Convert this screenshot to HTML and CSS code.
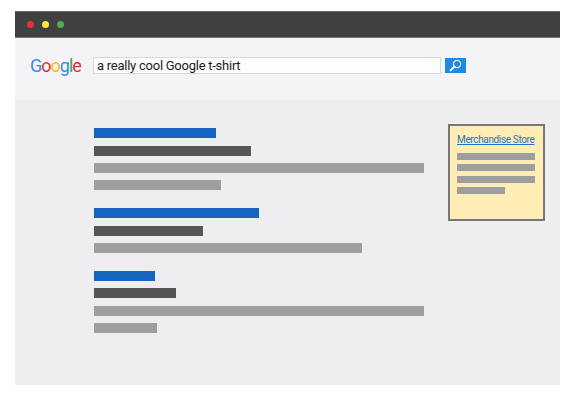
FILE: index.html
```html
<!DOCTYPE html>
<html lang="en">
<head>
    <meta charset="UTF-8">
    <meta name="viewport" content="width=device-width, initial-scale=1.0">
    <title>Merchandise Store search</title>
    <link rel="stylesheet" href="styles.css">
</head>
<body>
    <div class="window">
        <!-- title bar -->
        <div class="titlebar">
            <span class="dot red"></span>
            <span class="dot yellow"></span>
            <span class="dot green"></span>
        </div>

        <!-- search header -->
        <div class="header">
            <div class="logo"><span class="blue">G</span><span class="red-l">o</span><span class="yellow-l">o</span><span class="blue">g</span><span class="green-l">l</span><span class="red-l">e</span></div>
            <div class="searchbox">a really cool Google t-shirt</div>
            <button class="searchbtn" type="button" aria-label="Search">
                <svg width="13" height="13" viewBox="0 0 13 13">
                    <circle cx="8" cy="5" r="3.6" fill="none" stroke="#e3f0fb" stroke-width="1.2"/>
                    <path d="M5.4 7.6 L1.6 11.4" stroke="#fff" stroke-width="2" stroke-linecap="round"/>
                </svg>
            </button>
        </div>

        <!-- results -->
        <div class="content">
            <div class="results">
                <div class="group">
                    <div class="bar title w122"></div>
                    <div class="bar url w157"></div>
                    <div class="bar line w330"></div>
                    <div class="bar line w127"></div>
                </div>
                <div class="group">
                    <div class="bar title w165"></div>
                    <div class="bar url w109"></div>
                    <div class="bar line w268"></div>
                </div>
                <div class="group">
                    <div class="bar title w61"></div>
                    <div class="bar url w82"></div>
                    <div class="bar line w330"></div>
                    <div class="bar line w63"></div>
                </div>
            </div>

            <div class="ad">
                <a class="ad-link" href="#">Merchandise Store</a>
                <div class="ad-line"></div>
                <div class="ad-line"></div>
                <div class="ad-line"></div>
                <div class="ad-line short"></div>
            </div>
        </div>
    </div>
</body>
</html>
```

FILE: styles.css
```css
body {
    margin: 0;
    background-color: #fff;
    font-family: Roboto, "Liberation Sans", sans-serif;
}
.window {
    width: 545px;
    margin: 11px 0 0 15px;
}
.titlebar {
    height: 27px;
    background-color: #404040;
    display: flex;
    align-items: center;
    gap: 8px;
    padding-left: 12px;
    box-sizing: border-box;
    border-top: 1px solid #666;
    border-bottom: 1px solid #777;
}
.dot {
    width: 7px;
    height: 7px;
    border-radius: 50%;
}
.red { background-color: #e53238; }
.yellow { background-color: #fdea3c; }
.green { background-color: #4caf50; }

.header {
    height: 62px;
    background-color: #f4f4f7;
    display: flex;
    align-items: center;
    box-sizing: border-box;
    padding: 0 0 8px 15px;
}
.logo {
    width: 63px;
    font-size: 18px;
    letter-spacing: -1px;
}
.blue { color: #4285f4; }
.red-l { color: #ea2c35; }
.yellow-l { color: #fbbc05; }
.green-l { color: #34a853; }

.searchbox {
    width: 348px;
    height: 17px;
    box-sizing: border-box;
    background-color: #fdfdfd;
    border: 1px solid #d8d8d8;
    padding-left: 3px;
    font-size: 13px;
    letter-spacing: -0.25px;
    line-height: 15px;
    color: #1c1c1c;
}
.searchbtn {
    width: 21px;
    height: 15px;
    margin-left: 4px;
    padding: 0;
    border: none;
    background-color: #1e88e5;
    display: flex;
    align-items: center;
    justify-content: center;
}

.content {
    height: 285px;
    background-color: #eeeef0;
    display: flex;
    align-items: flex-start;
    box-sizing: border-box;
    padding: 24px 0 0 79px;
}
.results {
    width: 355px;
    padding-top: 4.25px;
    display: flex;
    flex-direction: column;
    gap: 18.25px;
}
.group {
    display: flex;
    flex-direction: column;
    gap: 7.25px;
}
.bar { height: 10px; }
.bar.title { background-color: #1565c0; }
.bar.url { background-color: #555558; }
.bar.line { background-color: #9e9e9e; }
.w61 { width: 61px; }
.w63 { width: 63px; }
.w82 { width: 82px; }
.w109 { width: 109px; }
.w122 { width: 122px; }
.w127 { width: 127px; }
.w157 { width: 157px; }
.w165 { width: 165px; }
.w268 { width: 268px; }
.w330 { width: 330px; }

.ad {
    width: 97px;
    height: 97px;
    margin-left: -1px;
    box-sizing: border-box;
    background-color: #ffedb5;
    border: 2px solid #77777a;
    padding: 7px 8px 0 7px;
}
.ad-link {
    display: block;
    margin-bottom: 7px;
    font-size: 10px;
    letter-spacing: -0.35px;
    line-height: 13px;
    color: #1e74c4;
    white-space: nowrap;
}
.ad-line {
    height: 7px;
    margin-bottom: 4.3px;
    background-color: #9e9e9e;
}
.ad-line.short { width: 48px; }
```
